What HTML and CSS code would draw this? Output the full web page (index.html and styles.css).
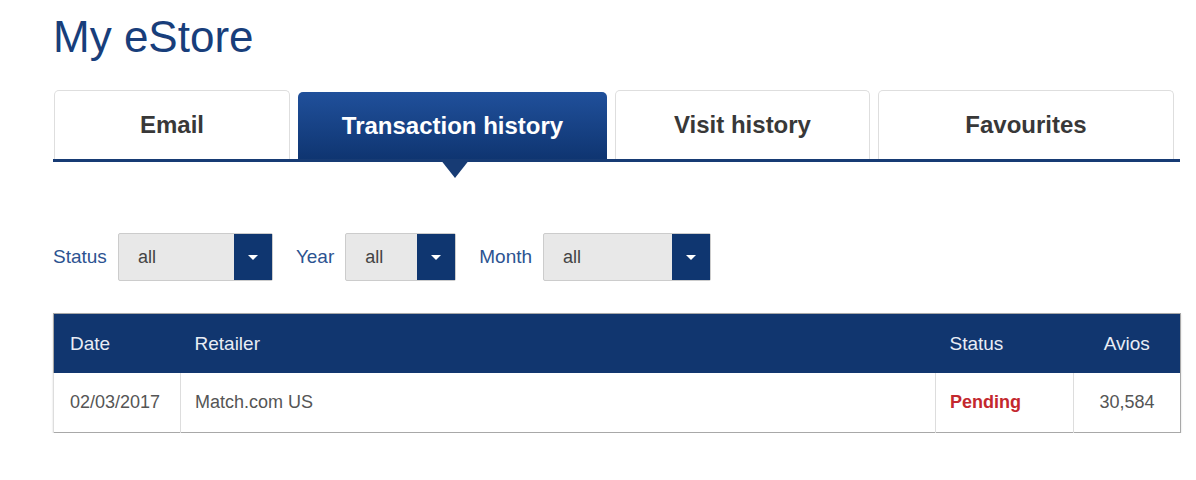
FILE: index.html
```html
<!DOCTYPE html>
<html lang="en">

<head>
    <meta charset="UTF-8">
    <meta name="viewport" content="width=device-width, initial-scale=1.0">
    <title>My eStore</title>
    <link rel="stylesheet" href="styles.css">
</head>

<body>
    <div class="content">
        <h1 class="page-title">My eStore</h1>

        <div class="tabs">
            <div class="tab">Email</div>
            <div class="tab active">Transaction history</div>
            <div class="tab">Visit history</div>
            <div class="tab">Favourites</div>
        </div>

        <div class="filters">
            <label class="filter-label">Status</label>
            <div class="select select-status">
                <span class="select-value">all</span>
                <span class="select-arrow"></span>
            </div>
            <label class="filter-label">Year</label>
            <div class="select select-year">
                <span class="select-value">all</span>
                <span class="select-arrow"></span>
            </div>
            <label class="filter-label">Month</label>
            <div class="select select-month">
                <span class="select-value">all</span>
                <span class="select-arrow"></span>
            </div>
        </div>

        <table class="history">
            <colgroup>
                <col class="col-date">
                <col class="col-retailer">
                <col class="col-status">
                <col class="col-avios">
            </colgroup>
            <thead>
                <tr>
                    <th>Date</th>
                    <th>Retailer</th>
                    <th>Status</th>
                    <th class="center">Avios</th>
                </tr>
            </thead>
            <tbody>
                <tr>
                    <td>02/03/2017</td>
                    <td>Match.com US</td>
                    <td class="pending">Pending</td>
                    <td class="center">30,584</td>
                </tr>
            </tbody>
        </table>
    </div>
</body>

</html>
```

FILE: styles.css
```css
body {
    margin: 0;
    font-family: "Liberation Sans", Arial, sans-serif;
    background-color: #ffffff;
}

.content {
    width: 1127px;
    padding-left: 53px;
}

.page-title {
    margin: 12px 0 0;
    font-size: 44px;
    line-height: 50px;
    font-weight: normal;
    color: #183e7b;
}

.tabs {
    display: grid;
    grid-template-columns: 236px 309px 255px 296px;
    column-gap: 8px;
    align-items: end;
    margin-top: 28px;
    padding-left: 1px;
    border-bottom: 3px solid #173b74;
}

.tab {
    position: relative;
    height: 68px;
    display: flex;
    justify-content: center;
    align-items: center;
    background-color: #ffffff;
    border: 1px solid #dedede;
    border-bottom: none;
    border-radius: 5px 5px 0 0;
    font-size: 24px;
    font-weight: bold;
    color: #383838;
}

.tab.active {
    height: 67px;
    border: none;
    background: linear-gradient(#20509b, #0f3571);
    color: #ffffff;
}

.tab.active::after {
    content: "";
    position: absolute;
    top: 100%;
    left: 50%;
    margin-left: -13px;
    border-left: 15px solid transparent;
    border-right: 15px solid transparent;
    border-top: 19px solid #173b74;
}

.filters {
    display: flex;
    align-items: center;
    margin-top: 71px;
}

.filter-label {
    font-size: 19px;
    color: #2c5391;
    margin-right: 11px;
}

.select {
    display: flex;
    height: 48px;
    box-sizing: border-box;
    background-color: #e8e8e8;
    border: 1px solid #cccccc;
    border-radius: 2px;
    margin-right: 23px;
}

.select-status {
    width: 155px;
}

.select-year {
    width: 111px;
}

.select-month {
    width: 168px;
}

.select-value {
    flex: 1;
    display: flex;
    align-items: center;
    padding-left: 19px;
    font-size: 18px;
    color: #444444;
}

.select-arrow {
    width: 38px;
    display: flex;
    justify-content: center;
    align-items: center;
    background-color: #0f3670;
}

.select-arrow::before {
    content: "";
    border-left: 5px solid transparent;
    border-right: 5px solid transparent;
    border-top: 5px solid #ffffff;
}

.history {
    width: 1127px;
    margin-top: 32px;
    border-collapse: collapse;
    table-layout: fixed;
    border: 1px solid #a8a8a8;
    box-shadow: 0 1px 2px rgba(0, 0, 0, 0.15);
}

.col-date {
    width: 127px;
}

.col-retailer {
    width: 755px;
}

.col-status {
    width: 138px;
}

.col-avios {
    width: 107px;
}

.history th {
    height: 59px;
    padding: 0 14px;
    background-color: #11366f;
    color: #e9edf5;
    font-size: 19px;
    font-weight: normal;
    text-align: left;
}

.history th:first-child,
.history td:first-child {
    padding-left: 16px;
}

.history td {
    height: 59px;
    padding: 0 14px;
    border-left: 1px solid #dddddd;
    font-size: 18px;
    color: #555555;
}

.history .center {
    text-align: center;
    padding: 0;
}

.history td.pending {
    color: #c3282e;
    font-weight: bold;
}
```
